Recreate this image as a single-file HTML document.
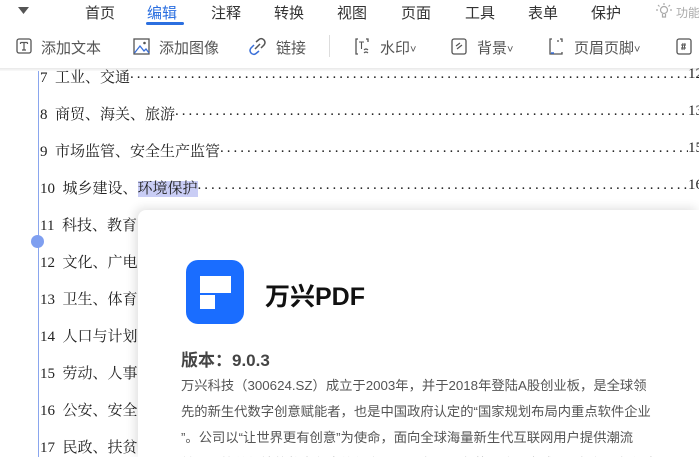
<!DOCTYPE html>
<html style="overflow:hidden"><head><meta charset="utf-8"><style>
*{margin:0;padding:0;box-sizing:border-box}
html,body{width:699px;height:457px;overflow:hidden}
body{background:#fff;position:relative;font-family:"Liberation Sans","Noto Sans CJK SC",sans-serif}
.a{position:absolute;white-space:nowrap}
.tab{font-size:15px;color:#333;top:2px}
.tb{font-size:15px;color:#555;top:37px}
.doc{font-family:"Liberation Serif","Noto Serif CJK SC",serif;font-size:15px;color:#222;left:40px}
.row{display:flex;width:668px;overflow:hidden}
.row .t{flex:none}
.row .d{flex:1 1 0;min-width:0;overflow:hidden;letter-spacing:3px}
.row .n{flex:none;width:20px}
svg{position:absolute}
</style></head><body>
<svg style="left:18px;top:7px" width="12" height="8"><path d="M0 0H11L5.5 7Z" fill="#555"/></svg>
<div class="a tab" style="left:85px">首页</div>
<div class="a tab" style="left:147px;color:#2b6fe0">编辑</div>
<div class="a" style="left:146px;top:22px;width:38px;height:3px;background:#2b6fe0;border-radius:2px"></div>
<div class="a tab" style="left:211px">注释</div>
<div class="a tab" style="left:274px">转换</div>
<div class="a tab" style="left:337px">视图</div>
<div class="a tab" style="left:401px">页面</div>
<div class="a tab" style="left:465px">工具</div>
<div class="a tab" style="left:528px">表单</div>
<div class="a tab" style="left:591px">保护</div>
<svg style="left:656px;top:3px" width="16" height="16"><g stroke="#aaa" fill="none" stroke-width="1.2"><circle cx="8" cy="7" r="3.5"/><path d="M6.5 11V14H9.5V11M8 0V2M2 2L3.5 3.5M14 2L12.5 3.5M0 7H2M14 7H16"/></g></svg>
<div class="a" style="left:676px;top:4px;font-size:12px;color:#aaa">功能</div>
<svg style="left:16px;top:38px" width="16" height="16"><rect x="1" y="1" width="14" height="14" rx="2" fill="none" stroke="#555" stroke-width="1.3"/><path d="M4.5 4.5H11.5M8 4.5V12M6 12H10M4.5 4.5V6M11.5 4.5V6" stroke="#555" stroke-width="1.2" fill="none"/></svg>
<div class="a tb" style="left:41px">添加文本</div>
<svg style="left:133px;top:38px" width="17" height="17"><rect x="1" y="1" width="15" height="15" fill="none" stroke="#555" stroke-width="1.3"/><path d="M1.5 15L7 8L11 13L13 11L16 15" stroke="#3a6fd8" fill="none" stroke-width="1.3"/><circle cx="11.5" cy="5" r="1.3" fill="#555"/></svg>
<div class="a tb" style="left:159px">添加图像</div>
<svg style="left:248px;top:37px" width="19" height="19"><path d="M8 5L11 2.5Q13.5 0.5 16 3Q18 5.5 16 8L13 11" stroke="#555" fill="none" stroke-width="1.5"/><path d="M11 14L8 16.5Q5.5 18.5 3 16Q1 13.5 3 11L6 8" stroke="#3a6fd8" fill="none" stroke-width="1.5"/><path d="M7 12L12 7" stroke="#555" stroke-width="1.5"/></svg>
<div class="a tb" style="left:276px">链接</div>
<div class="a" style="left:329px;top:35px;width:1px;height:22px;background:#ddd"></div>
<svg style="left:354px;top:38px" width="16" height="17"><path d="M4 1H2V16H4M12 1H14V4" stroke="#555" fill="none" stroke-width="1.3"/><path d="M5 4H10M7.5 4V11M10 12Q12 10 14 12M10 15Q12 13 14 15" stroke="#555" fill="none" stroke-width="1.1"/></svg>
<div class="a tb" style="left:380px">水印<span style="font-size:11px">˅</span></div>
<svg style="left:451px;top:38px" width="16" height="17"><rect x="1" y="1" width="14" height="15" rx="2" fill="none" stroke="#555" stroke-width="1.3"/><path d="M5 8L9 5M6 11L11 7" stroke="#555" stroke-width="1.2"/></svg>
<div class="a tb" style="left:477px">背景<span style="font-size:11px">˅</span></div>
<svg style="left:548px;top:38px" width="16" height="17"><path d="M4 1H2V16H14V14M12 1H14V4M9 3H11" stroke="#555" fill="none" stroke-width="1.3"/><path d="M3 15H6" stroke="#3a6fd8" stroke-width="1.5"/></svg>
<div class="a tb" style="left:574px">页眉页脚<span style="font-size:11px">˅</span></div>
<svg style="left:676px;top:38px" width="16" height="17"><rect x="1" y="1" width="14" height="15" rx="2" fill="none" stroke="#555" stroke-width="1.3"/><path d="M5 7H10M5 10H10M7 5L6 12M9 5L8 12" stroke="#555" stroke-width="1"/></svg>
<div class="a" style="left:0;top:68px;width:699px;height:3px;background:linear-gradient(#e8e8e8,#fafafa)"></div>
<div class="a" style="left:38px;top:71px;width:1px;height:386px;background:#8aa6ee"></div>
<div class="a" style="left:31px;top:235px;width:13px;height:13px;border-radius:50%;background:#7f9ff0"></div>
<div class="a doc row" style="top:66px"><span class="t">7&nbsp; 工业、交通</span><span class="d">....................................................................................................................................</span><span class="n">12</span></div>
<div class="a doc row" style="top:103px"><span class="t">8&nbsp; 商贸、海关、旅游</span><span class="d">....................................................................................................................................</span><span class="n">13</span></div>
<div class="a doc row" style="top:140px"><span class="t">9&nbsp; 市场监管、安全生产监管</span><span class="d">....................................................................................................................................</span><span class="n">15</span></div>
<div class="a doc row" style="top:177px"><span class="t">10&nbsp; 城乡建设、<span style="background:#c9cdf5">环境保护</span></span><span class="d">....................................................................................................................................</span><span class="n">16</span></div>
<div class="a doc" style="top:214px">11&nbsp; 科技、教育</div>
<div class="a doc" style="top:251px">12&nbsp; 文化、广电</div>
<div class="a doc" style="top:288px">13&nbsp; 卫生、体育</div>
<div class="a doc" style="top:325px">14&nbsp; 人口与计划</div>
<div class="a doc" style="top:362px">15&nbsp; 劳动、人事</div>
<div class="a doc" style="top:399px">16&nbsp; 公安、安全</div>
<div class="a doc" style="top:436px">17&nbsp; 民政、扶贫</div>
<div class="a" style="left:138px;top:210px;width:561px;height:247px;background:#fff;border-radius:8px 0 0 0;box-shadow:-3px -2px 10px rgba(0,0,0,0.12);overflow:hidden">
<div class="a" style="left:48px;top:50px;width:58px;height:64px;background:#1a6dff;border-radius:12px"></div>
<div class="a" style="left:62px;top:66px;width:31px;height:17px;background:#fff"></div>
<div class="a" style="left:62px;top:85px;width:15px;height:14px;background:#fff"></div>
<div class="a" style="left:127px;top:67px;font-size:25px;font-weight:bold;color:#111">万兴PDF</div>
<div class="a" style="left:43px;top:136px;font-size:17px;font-weight:bold;color:#444">版本：9.0.3</div>
<div class="a" style="left:43px;top:163px;font-size:13.3px;color:#555;line-height:26px">
万兴科技（300624.SZ）成立于2003年，并于2018年登陆A股创业板，是全球领<br>先的新生代数字创意赋能者，也是中国政府认定的“国家规划布局内重点软件企业<br>”。公司以“让世界更有创意”为使命，面向全球海量新生代互联网用户提供潮流<br>前沿、简单便捷的数字创意软件产品与服务，业务范围遍及全球200多个国家和地</div>
</div>
</body></html>
